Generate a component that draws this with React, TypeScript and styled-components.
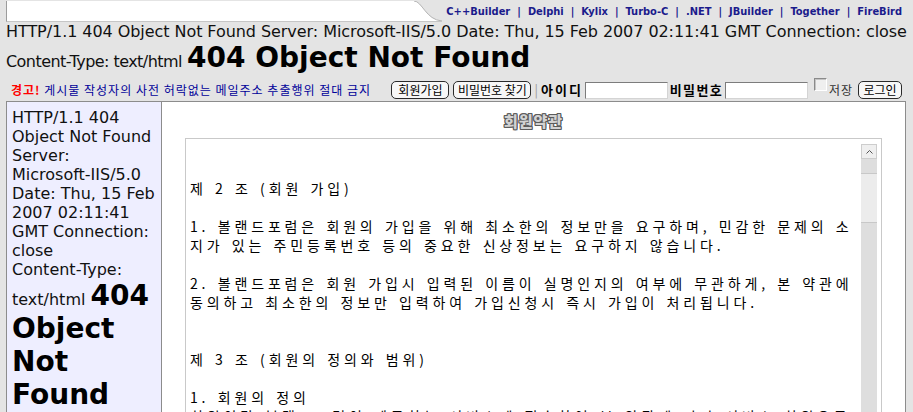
import styled, { createGlobalStyle } from "styled-components";

// ============================================================================
// GLOBAL
// ============================================================================

const GlobalStyle = createGlobalStyle`
  html, body {
    margin: 0;
    padding: 0;
    overflow: hidden;
    background: #e4e4e4;
  }
  body {
    font-family: "DejaVu Sans", "Noto Sans CJK KR", sans-serif;
    color: #000;
  }
`;

const KR = `"Noto Sans CJK KR", "DejaVu Sans", sans-serif`;

// ============================================================================
// LAYOUT
// ============================================================================

const Page = styled.div`
  width: 913px;
  box-sizing: border-box;
  padding: 0 7px 0 6px;
`;

// top navigation strip
const TopBar = styled.div`
  display: flex;
  align-items: stretch;
  height: 22px;
`;

const Tab = styled.div`
  flex: 0 0 406px;
  margin-top: 1px;
  background: #fff;
  border-left: 1px solid #9c9c9c;
  border-bottom: 1px solid #c6c6c6;
`;

const TabCurve = styled.svg`
  flex: 0 0 30px;
  margin-top: 1px;
  display: block;
`;

const NavLinks = styled.div`
  flex: 1;
  display: flex;
  align-items: center;
  justify-content: flex-end;
  padding-right: 4px;
  font-family: "DejaVu Sans Condensed", "DejaVu Sans", sans-serif;
  font-stretch: condensed;
  font-weight: bold;
  font-size: 11px;
  color: #1b1b8c;
  white-space: nowrap;
`;

const NavLink = styled.span`
  cursor: pointer;
`;

const NavSep = styled.span`
  margin: 0 7px;
`;

// raw 404 response text
const ErrorText = styled.div`
  font-size: 16px;
  color: #111;
`;

const HeaderLine = styled.div`
  white-space: nowrap;
`;

const Squeezed = styled.span<{ $ls: number }>`
  letter-spacing: ${(p) => p.$ls}px;
`;

const BigTitle = styled.span`
  font-weight: bold;
  font-size: 28px;
  color: #000;
  letter-spacing: 0;
`;

// notice + login row
const NoticeRow = styled.div`
  display: flex;
  align-items: center;
  height: 22px;
  padding: 5px 4px 0 5px;
`;

const Notice = styled.div`
  font-family: ${KR};
  font-size: 12px;
  line-height: 16px;
  letter-spacing: 1px;
  color: #000099;
  white-space: nowrap;
`;

const Warn = styled.b`
  color: #f00;
`;

const LoginForm = styled.div`
  margin-left: auto;
  display: flex;
  align-items: center;
  gap: 2px;
  font-family: ${KR};
`;

const Btn = styled.button<{ $w: number; $gap?: number }>`
  all: unset;
  box-sizing: border-box;
  width: ${(p) => p.$w}px;
  height: 18px;
  margin-left: ${(p) => p.$gap ?? 0}px;
  border: 1px solid #2a2a2a;
  border-radius: 5px;
  background: #f7f7f7;
  font-family: ${KR};
  font-size: 12px;
  line-height: 16px;
  text-align: center;
  color: #000;
  white-space: nowrap;
`;

const Bar = styled.span`
  color: #9a9a9a;
  font-size: 13px;
  line-height: 16px;
  margin: 0 1px;
`;

const Label = styled.span<{ $bold?: boolean; $ls?: number }>`
  font-size: ${(p) => (p.$bold ? 13 : 12)}px;
  font-weight: ${(p) => (p.$bold ? "bold" : "normal")};
  color: ${(p) => (p.$bold ? "#000" : "#333")};
  letter-spacing: ${(p) => p.$ls ?? 1}px;
  line-height: 16px;
  white-space: nowrap;
`;

const Field = styled.div`
  box-sizing: border-box;
  width: 83px;
  height: 17px;
  background: #fff;
  border: 1px solid;
  border-color: #7c7c7c #d4d4d4 #d4d4d4 #7c7c7c;
`;

const Check = styled.div`
  box-sizing: border-box;
  width: 13px;
  height: 13px;
  margin: 0 0 11px 4px;
  background: #efefef;
  border: 1px solid;
  border-color: #8a8a8a #fff #fff #8a8a8a;
  box-shadow: inset 1px 1px 0 #c4c4c4;
`;

// main two-column box
const Main = styled.div`
  display: flex;
  height: 330px;
  border: 1px solid #8c8c8c;
  border-bottom: none;
`;

const Side = styled.div`
  flex: 0 0 149px;
  padding: 6px 0 0 5px;
  background: #eeeeff;
  border-right: 1px solid #8c8c8c;
  font-size: 16px;
  color: #111;
  white-space: nowrap;
  overflow: hidden;
`;

const Content = styled.div`
  flex: 1;
  background: #fff;
  display: flex;
  flex-direction: column;
  padding: 0 23px;
`;

const Title = styled.div`
  align-self: center;
  margin: 11px 0 10px 0;
  font-family: ${KR};
  font-size: 15px;
  font-weight: 900;
  line-height: 15px;
  letter-spacing: 1px;
  color: #d2d2d2;
  text-shadow:
    1px 0 0 #5c5c5c,
    -1px 0 0 #5c5c5c,
    0 1px 0 #5c5c5c,
    0 -1px 0 #5c5c5c,
    1px 1px 0 #5c5c5c,
    -1px -1px 0 #5c5c5c,
    1px -1px 0 #5c5c5c,
    -1px 1px 0 #5c5c5c;
`;

const TermsBox = styled.div`
  flex: 1;
  display: flex;
  border: 1px solid #c9c9c9;
  border-bottom: none;
  overflow: hidden;
`;

const TermsText = styled.div`
  flex: 1;
  padding: 2px 0 0 4px;
  font-family: "Noto Sans CJK KR", monospace;
  font-size: 14px;
  line-height: 19px;
  letter-spacing: 3.85px;
  word-spacing: 1.35px;
  white-space: pre;
  color: #000;
  overflow: hidden;
`;

const ScrollBar = styled.div`
  flex: 0 0 16px;
  margin: 5px 4px 0 0;
  display: flex;
  flex-direction: column;
`;

const ScrollUp = styled.div`
  box-sizing: border-box;
  height: 15px;
  background: #efefef;
  border: 1px solid #cdcdcd;
  display: flex;
  align-items: center;
  justify-content: center;
`;

const Track = styled.div`
  flex: 1;
  background: #dedede;
  padding-top: 14px;
`;

const Thumb = styled.div`
  height: 50px;
  background: #ececec;
  border-top: 1px solid #c8c8c8;
  border-bottom: 1px solid #c8c8c8;
  box-sizing: border-box;
`;

// ============================================================================
// DATA
// ============================================================================

const navItems = [
  "C++Builder",
  "Delphi",
  "Kylix",
  "Turbo-C",
  ".NET",
  "JBuilder",
  "Together",
  "FireBird",
];

const sideLines = [
  "HTTP/1.1 404",
  "Object Not Found",
  "Server:",
  "Microsoft-IIS/5.0",
  "Date: Thu, 15 Feb",
  "2007 02:11:41",
  "GMT Connection:",
  "close",
  "Content-Type:",
];

const terms = [
  "",
  "",
  "제 2 조 (회원 가입)",
  "",
  "1. 볼랜드포럼은 회원의 가입을 위해 최소한의 정보만을 요구하며, 민감한 문제의 소",
  "지가 있는 주민등록번호 등의 중요한 신상정보는 요구하지 않습니다.",
  "",
  "2. 볼랜드포럼은 회원 가입시 입력된 이름이 실명인지의 여부에 무관하게, 본 약관에",
  "동의하고 최소한의 정보만 입력하여 가입신청시 즉시 가입이 처리됩니다.",
  "",
  "",
  "제 3 조 (회원의 정의와 범위)",
  "",
  "1. 회원의 정의",
  "회원이란 볼랜드포럼이 제공하는 서비스에 접속하여 본 약관에 따라 서비스 회원으로",
  "가입하여 서비스를 이용하는 자를 말합니다.",
].join("\n");

// ============================================================================
// COMPONENT
// ============================================================================

export default function App() {
  return (
    <>
      <GlobalStyle />
      <Page>
        <TopBar>
          <Tab />
          <TabCurve width="30" height="21" viewBox="0 0 30 21">
            <path d="M0 0 L1 0 C9 0 13 19 29 20 L0 20 Z" fill="#fff" />
            <path d="M1 0 C9 0 13 19 29 20" fill="none" stroke="#b4b4b4" strokeWidth="1" />
            <path d="M0 20.5 L29 20.5" stroke="#c6c6c6" strokeWidth="1" />
          </TabCurve>
          <NavLinks>
            {navItems.map((item, i) => (
              <span key={item}>
                {i > 0 && <NavSep>|</NavSep>}
                <NavLink>{item}</NavLink>
              </span>
            ))}
          </NavLinks>
        </TopBar>

        <ErrorText>
          <HeaderLine>
            <Squeezed $ls={-0.06}>
              HTTP/1.1 404 Object Not Found Server: Microsoft-IIS/5.0 Date: Thu,
              15 Feb 2007 02:11:41 GMT Connection: close
            </Squeezed>
          </HeaderLine>
          <HeaderLine>
            <Squeezed $ls={-0.55}>Content-Type: text/html</Squeezed>{" "}
            <BigTitle>404 Object Not Found</BigTitle>
          </HeaderLine>
        </ErrorText>

        <NoticeRow>
          <Notice>
            <Warn>경고!</Warn> 게시물 작성자의 사전 허락없는 메일주소 추출행위 절대 금지
          </Notice>
          <LoginForm>
            <Btn $w={58}>회원가입</Btn>
            <Btn $w={78} $gap={2}>비밀번호 찾기</Btn>
            <Bar>|</Bar>
            <Label $bold $ls={2}>아이디</Label>
            <Field />
            <Label $bold $ls={1.3}>비밀번호</Label>
            <Field />
            <Check />
            <Label>저장</Label>
            <Btn $w={44} $gap={3}>로그인</Btn>
          </LoginForm>
        </NoticeRow>

        <Main>
          <Side>
            {sideLines.map((line) => (
              <div key={line}>{line}</div>
            ))}
            <div>
              text/html <BigTitle>404</BigTitle>
            </div>
            <div>
              <BigTitle>Object</BigTitle>
            </div>
            <div>
              <BigTitle>Not</BigTitle>
            </div>
            <div>
              <BigTitle>Found</BigTitle>
            </div>
          </Side>

          <Content>
            <Title>회원약관</Title>
            <TermsBox>
              <TermsText>{terms}</TermsText>
              <ScrollBar>
                <ScrollUp>
                  <svg width="7" height="4" viewBox="0 0 7 4">
                    <path d="M0.5 3.5 L3.5 0.5 L6.5 3.5" fill="none" stroke="#555" strokeWidth="1" />
                  </svg>
                </ScrollUp>
                <Track>
                  <Thumb />
                </Track>
              </ScrollBar>
            </TermsBox>
          </Content>
        </Main>
      </Page>
    </>
  );
}
